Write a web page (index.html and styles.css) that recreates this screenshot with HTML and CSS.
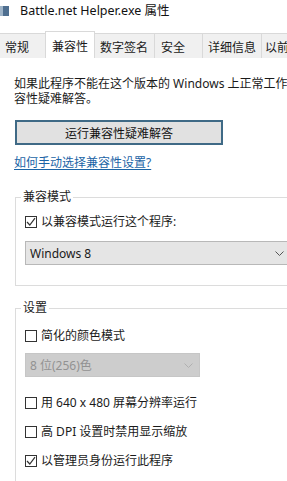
FILE: index.html
```html
<!DOCTYPE html>
<html lang="zh-CN">
<head>
<meta charset="utf-8">
<title>Battle.net Helper.exe 属性</title>
<link rel="stylesheet" href="styles.css">
</head>
<body>
<div class="window">
  <div class="titlebar">
    <span class="app-icon"></span>
    <span class="title">Battle.net Helper.exe 属性</span>
  </div>
  <div class="tabs">
    <div class="tab t1">常规</div>
    <div class="tab t2 active">兼容性</div>
    <div class="tab t3">数字签名</div>
    <div class="tab t4">安全</div>
    <div class="tab t5">详细信息</div>
    <div class="tab t6">以前的版本</div>
  </div>
  <div class="panel">
    <p class="intro">如果此程序不能在这个版本的 Windows 上正常工作，请尝试运行兼<br>容性疑难解答。</p>
    <button class="btn" type="button">运行兼容性疑难解答</button>
    <a class="link" href="#">如何手动选择兼容性设置?</a>

    <fieldset class="group g1">
      <legend>兼容模式</legend>
      <label class="check first">
        <span class="box"><svg viewBox="0 0 12 12" width="12" height="12"><polyline points="2,6 4.8,9 10,2.2" fill="none" stroke="#333" stroke-width="1.2"/></svg></span>
        <span>以兼容模式运行这个程序:</span>
      </label>
      <div class="select">
        <span>Windows 8</span>
        <svg class="chev" viewBox="0 0 9 5" width="9" height="5"><polyline points="0.5,0.5 4.5,4.5 8.5,0.5" fill="none" stroke="#555" stroke-width="1"/></svg>
      </div>
    </fieldset>

    <fieldset class="group g2">
      <legend>设置</legend>
      <label class="check first">
        <span class="box"></span>
        <span>简化的颜色模式</span>
      </label>
      <div class="select disabled">
        <span>8 位(256)色</span>
        <svg class="chev" viewBox="0 0 9 5" width="9" height="5"><polyline points="0.5,0.5 4.5,4.5 8.5,0.5" fill="none" stroke="#b0b0b0" stroke-width="1"/></svg>
      </div>
      <label class="check after-select">
        <span class="box"></span>
        <span>用 640 x 480 屏幕分辨率运行</span>
      </label>
      <label class="check">
        <span class="box"></span>
        <span>高 DPI 设置时禁用显示缩放</span>
      </label>
      <label class="check">
        <span class="box"><svg viewBox="0 0 12 12" width="12" height="12"><polyline points="2,6 4.8,9 10,2.2" fill="none" stroke="#333" stroke-width="1.2"/></svg></span>
        <span>以管理员身份运行此程序</span>
      </label>
    </fieldset>
  </div>
</div>
</body>
</html>
```

FILE: styles.css
```css
html, body {
  margin: 0;
  padding: 0;
  background: #ffffff;
  overflow: hidden;
}

body {
  font-family: "Noto Sans", "Noto Sans CJK SC", sans-serif;
  font-size: 12px;
  color: #1a1a1a;
}

.window {
  width: 360px;
  height: 481px;
  overflow: hidden;
}

.titlebar {
  height: 22px;
  display: flex;
  align-items: center;
}

.app-icon {
  width: 9px;
  height: 10px;
  background: linear-gradient(90deg, #9fb4c8 0 30%, #4f6f90 30% 100%);
}

.title {
  margin-left: 11px;
  font-size: 12.5px;
  color: #111;
  line-height: 16px;
}

.tabs {
  height: 36px;
  display: flex;
  align-items: flex-end;
}

.tab {
  box-sizing: border-box;
  height: 25px;
  padding-top: 6px;
  line-height: 16px;
  white-space: nowrap;
  background: #f0f0f0;
  border-top: 1px solid #d9d9d9;
  border-right: 1px solid #d9d9d9;
  color: #1a1a1a;
  flex: none;
}

.tab.active {
  height: 27px;
  padding-top: 7px;
  background: #ffffff;
  border-left: 1px solid #d9d9d9;
}

.t1 { margin-left: -12px; width: 58px; padding-left: 17px; }
.t2 { width: 50px; padding-left: 6px; margin-left: -1px; }
.t3 { width: 60px; padding-left: 5px; }
.t4 { width: 48px; padding-left: 6px; }
.t5 { width: 59px; padding-left: 5px; }
.t6 { width: 70px; padding-left: 3px; }

.panel {
  padding: 18px 0 0 14px;
}

.intro {
  margin: 0;
  line-height: 15px;
  white-space: nowrap;
}

.btn {
  display: block;
  box-sizing: border-box;
  margin: 14px 0 0 1px;
  width: 208px;
  height: 25px;
  padding: 0;
  font: inherit;
  color: #111;
  background: #e1e1e1;
  border: 2px solid #3f6a86;
}

.link {
  display: block;
  margin-top: 10px;
  line-height: 16px;
  color: #1b64a6;
  text-decoration: underline;
  text-underline-offset: 2px;
  white-space: nowrap;
}

.group {
  box-sizing: border-box;
  width: 330px;
  margin: 0 0 0 1px;
  padding: 0 0 20px 0;
  border: 1px solid #dcdcdc;
  min-width: 0;
}

.g1 { margin-top: 18px; }
.g2 { margin-top: 14px; padding-bottom: 40px; }

.group legend {
  margin-left: 5px;
  padding: 0 2px;
  line-height: 16px;
  color: #222;
}

.check {
  display: flex;
  align-items: center;
  gap: 4px;
  margin: 13px 0 0 9px;
  line-height: 16px;
  white-space: nowrap;
}

.g1 .check.first { margin-top: 9px; }
.g2 .check.first { margin-top: 12px; }
.check.after-select { margin-top: 18px; }

.box {
  box-sizing: border-box;
  width: 12px;
  height: 12px;
  border: 1px solid #333;
  background: #fff;
  position: relative;
  flex: none;
}

.box svg {
  position: absolute;
  left: -1px;
  top: -1px;
}

.select {
  box-sizing: border-box;
  display: flex;
  align-items: center;
  justify-content: space-between;
  margin: 11px 0 0 9px;
  width: 270px;
  height: 24px;
  padding: 0 10px 0 4px;
  background: #e5e5e5;
  border: 1px solid #b8b8b8;
  white-space: nowrap;
}

.select.disabled {
  margin-top: 9px;
  width: 175px;
  padding-right: 6px;
  background: #cdcdcd;
  border-color: #c6c6c6;
  color: #929292;
}
```
